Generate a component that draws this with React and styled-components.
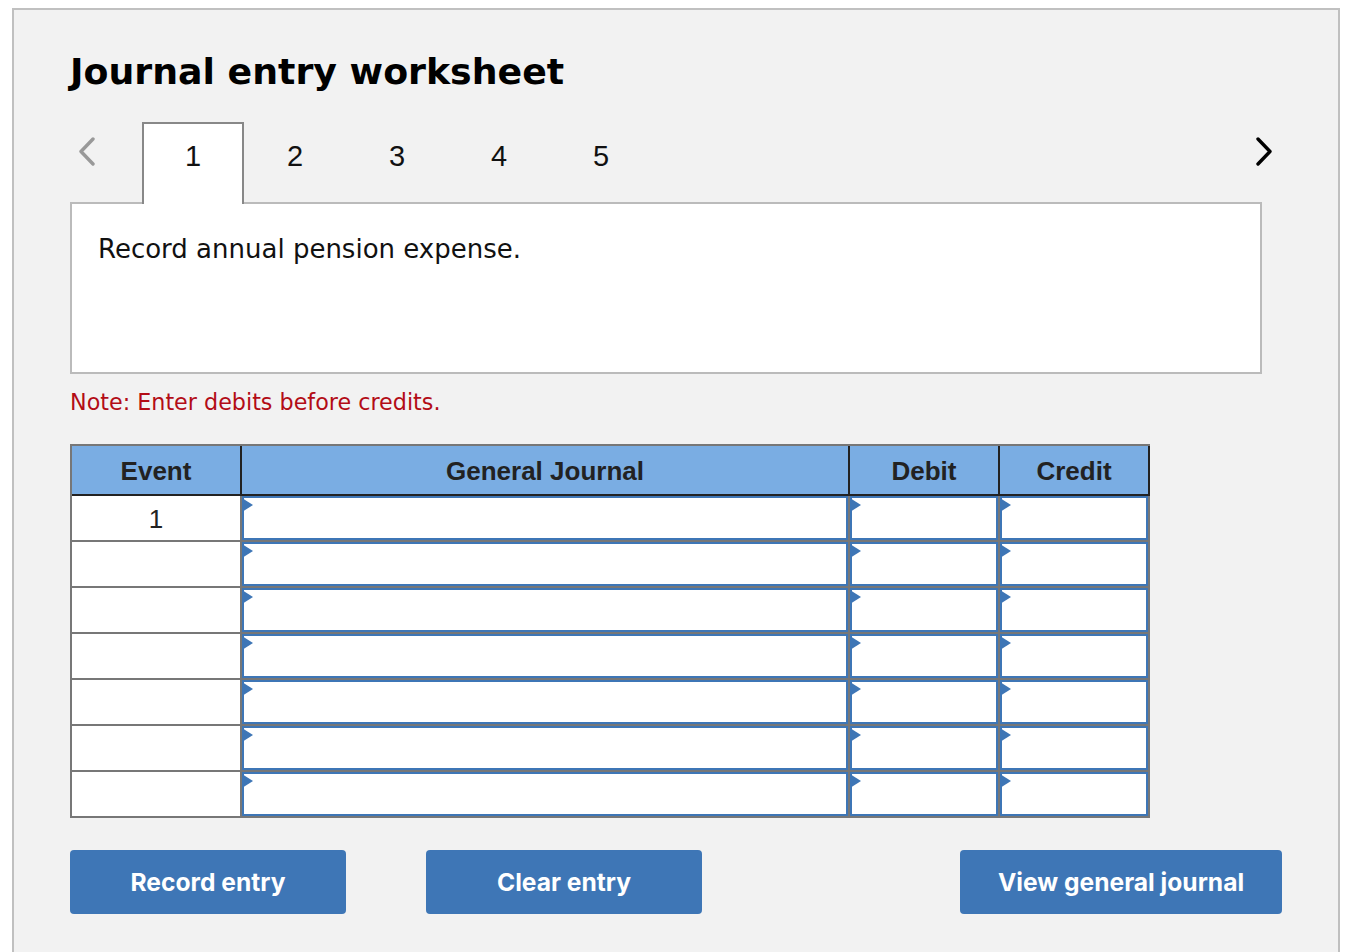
import React from "react";
import styled, { createGlobalStyle } from "styled-components";

const GlobalStyle = createGlobalStyle`
  html, body {
    margin: 0;
    height: 100%;
    overflow: hidden;
    background: #fff;
  }
`;

const Panel = styled.div`
  box-sizing: border-box;
  width: 1328px;
  height: 980px;
  margin: 8px 0 0 12px;
  padding: 42px 56px 0;
  background: #f2f2f2;
  border: 2px solid #c0c0c0;
`;

const Title = styled.h1`
  margin: 0 0 30px;
  font: 700 36.3px/40px "DejaVu Sans", sans-serif;
  color: #000;
`;

const TabRow = styled.div`
  display: flex;
  align-items: flex-start;
  height: 82px;
  margin-bottom: -2px;
`;

const Chevron = styled.button`
  display: flex;
  flex: none;
  width: ${(p) => p.$width}px;
  height: 30px;
  margin-top: 15px;
  padding: 0 0 0 ${(p) => p.$inset}px;
  background: none;
  border: 0;
  color: ${(p) => p.$color};
`;

const Tabs = styled.div`
  display: flex;
  flex: 1;
`;

const Tab = styled.div`
  position: relative;
  z-index: 1;
  box-sizing: border-box;
  width: 102px;
  height: 82px;
  padding-top: 15px;
  text-align: center;
  font: 400 29px/34px "Liberation Sans", sans-serif;
  color: #111;
  background: ${(p) => (p.$active ? "#fff" : "transparent")};
  border: 2px solid ${(p) => (p.$active ? "#888" : "transparent")};
  border-bottom: 0;
`;

const PromptBox = styled.div`
  box-sizing: border-box;
  width: 1192px;
  height: 172px;
  padding: 28px 26px;
  background: #fff;
  border: 2px solid #bbb;
  font: 400 26px/34px "DejaVu Sans", sans-serif;
  color: #111;
`;

const Note = styled.p`
  margin: 13px 0 27px;
  font: 400 22.25px/30px "DejaVu Sans", sans-serif;
  color: #b30c16;
`;

const Table = styled.table`
  box-sizing: border-box;
  width: 1080px;
  table-layout: fixed;
  border-collapse: separate;
  border-spacing: 0;
  border-top: 2px solid #777;
  border-left: 2px solid #777;
`;

const HeadCell = styled.th`
  box-sizing: border-box;
  width: ${(p) => p.$width}px;
  height: 50px;
  padding: 2px 0 0;
  background: #7aade3;
  border-right: 2px solid #222;
  border-bottom: 2px solid #222;
  font: 700 26px/30px "Liberation Sans", sans-serif;
  color: #222;
`;

const EventCell = styled.td`
  box-sizing: border-box;
  height: 46px;
  padding: 2px 0 0;
  background: #fff;
  border-right: 2px solid #777;
  border-bottom: 2px solid #777;
  text-align: center;
  font: 400 26px/30px "Liberation Sans", sans-serif;
  color: #222;
`;

const InputCell = styled.td`
  box-sizing: border-box;
  height: 46px;
  padding: 0;
  border-right: 2px solid #777;
  border-bottom: 2px solid #777;
`;

const EntryField = styled.div`
  position: relative;
  box-sizing: border-box;
  height: 44px;
  background: #fff;
  border: 2px solid #3e76b6;

  &::before {
    content: "";
    position: absolute;
    left: -2px;
    top: 0;
    border-left: 11px solid #3e76b6;
    border-top: 7px solid transparent;
    border-bottom: 7px solid transparent;
  }
`;

const ButtonRow = styled.div`
  display: flex;
  gap: 80px;
  margin-top: 32px;
`;

const ActionButton = styled.button`
  width: ${(p) => p.$width}px;
  height: 64px;
  margin-left: ${(p) => (p.$push ? "auto" : "0")};
  padding: 0;
  background: #3e76b6;
  border: 0;
  border-radius: 4px;
  font: 700 24.6px/30px Inter, sans-serif;
  color: #fff;
`;

const columns = [
  { label: "Event", width: 170 },
  { label: "General Journal", width: 608 },
  { label: "Debit", width: 150 },
  { label: "Credit", width: 150 },
];

const rows = ["1", "", "", "", "", "", ""];

export default function App() {
  return (
    <>
      <GlobalStyle />
      <Panel>
        <Title>Journal entry worksheet</Title>
        <TabRow>
          <Chevron $width={72} $inset={6} $color="#999">
            <svg width="22" height="30" viewBox="0 0 22 30" fill="none">
              <path d="M17 2 L5 14.5 L17 27" stroke="currentColor" strokeWidth="3.4" strokeLinecap="round" strokeLinejoin="round" />
            </svg>
          </Chevron>
          <Tabs>
            {[1, 2, 3, 4, 5].map((n) => (
              <Tab key={n} $active={n === 1}>{n}</Tab>
            ))}
          </Tabs>
          <Chevron $width={29} $inset={0} $color="#000">
            <svg width="22" height="30" viewBox="0 0 22 30" fill="none">
              <path d="M5 2 L17 14.5 L5 27" stroke="currentColor" strokeWidth="3.4" strokeLinecap="round" strokeLinejoin="round" />
            </svg>
          </Chevron>
        </TabRow>
        <PromptBox>Record annual pension expense.</PromptBox>
        <Note>Note: Enter debits before credits.</Note>
        <Table>
          <thead>
            <tr>
              {columns.map((c) => (
                <HeadCell key={c.label} $width={c.width}>{c.label}</HeadCell>
              ))}
            </tr>
          </thead>
          <tbody>
            {rows.map((event, i) => (
              <tr key={i}>
                <EventCell>{event}</EventCell>
                <InputCell><EntryField /></InputCell>
                <InputCell><EntryField /></InputCell>
                <InputCell><EntryField /></InputCell>
              </tr>
            ))}
          </tbody>
        </Table>
        <ButtonRow>
          <ActionButton $width={276}>Record entry</ActionButton>
          <ActionButton $width={276}>Clear entry</ActionButton>
          <ActionButton $width={322} $push>View general journal</ActionButton>
        </ButtonRow>
      </Panel>
    </>
  );
}
